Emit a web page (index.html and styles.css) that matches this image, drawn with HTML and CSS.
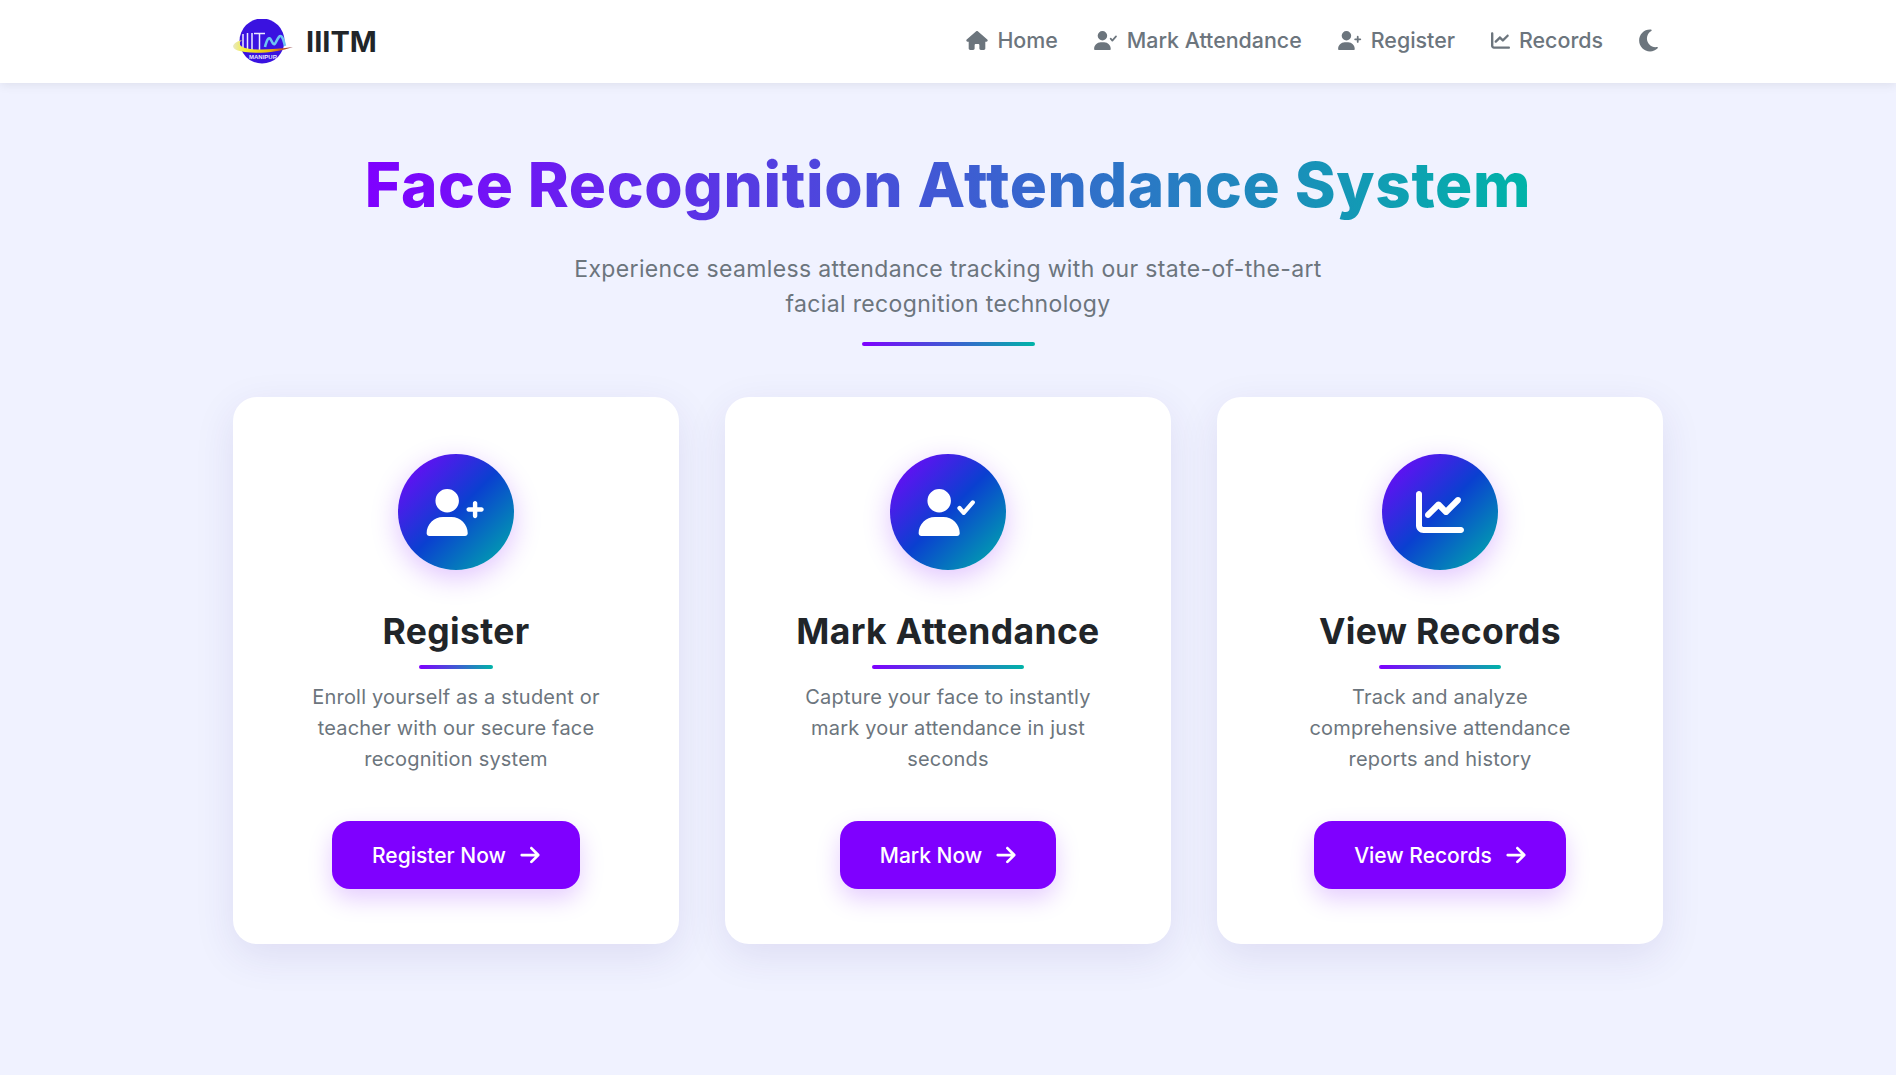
FILE: index.html
```html
<!DOCTYPE html>
<html lang="en">
<head>
<meta charset="utf-8">
<title>IIITM Face Recognition Attendance System</title>
<link rel="stylesheet" href="styles.css">
</head>
<body>
<svg class="sprite" aria-hidden="true">
  <symbol id="i-house" viewBox="0 0 576 512"><path d="M575.8 255.5c0 18-15 32.1-32 32.1h-32l.7 160.2c0 2.7-.2 5.4-.5 8.1V472c0 22.1-17.9 40-40 40H456c-1.1 0-2.2 0-3.3-.1c-1.4 .1-2.8 .1-4.2 .1H416 392c-22.1 0-40-17.9-40-40V448 384c0-17.7-14.3-32-32-32H256c-17.7 0-32 14.3-32 32v64 24c0 22.1-17.9 40-40 40H160 128.1c-1.5 0-3-.1-4.5-.2c-1.2 .1-2.4 .2-3.6 .2H104c-22.1 0-40-17.9-40-40V360c0-.9 0-1.9 .1-2.8V287.6H32c-18 0-32-14-32-32.1c0-9 3-17 10-24L266.4 8c7-7 15-8 22-8s15 2 21 7L564.8 231.5c8 7 12 15 11 24z"/></symbol>
  <symbol id="i-check" viewBox="0 0 640 512"><path d="M96 128a128 128 0 1 1 256 0A128 128 0 1 1 96 128zM0 482.3C0 383.8 79.8 304 178.3 304h91.4C368.2 304 448 383.8 448 482.3c0 16.4-13.3 29.7-29.7 29.7H29.7C13.3 512 0 498.7 0 482.3z"/><path d="M445 207l46 53 99-114" fill="none" stroke="currentColor" stroke-width="46" stroke-linecap="round" stroke-linejoin="round"/></symbol>
  <symbol id="i-plus" viewBox="0 0 640 512"><path d="M96 128a128 128 0 1 1 256 0A128 128 0 1 1 96 128zM0 482.3C0 383.8 79.8 304 178.3 304h91.4C368.2 304 448 383.8 448 482.3c0 16.4-13.3 29.7-29.7 29.7H29.7C13.3 512 0 498.7 0 482.3zM504 294V248H458c-13.3 0-24-10.7-24-24s10.7-24 24-24h46V154c0-13.3 10.7-24 24-24s24 10.7 24 24v46h46c13.3 0 24 10.7 24 24s-10.7 24-24 24H552v46c0 13.3-10.7 24-24 24s-24-10.7-24-24z"/></symbol>
  <symbol id="i-chart" viewBox="0 0 512 512"><path d="M64 64c0-17.7-14.3-32-32-32S0 46.3 0 64V400c0 44.2 35.8 80 80 80H480c17.7 0 32-14.3 32-32s-14.3-32-32-32H80c-8.8 0-16-7.2-16-16V64zm406.6 86.6c12.5-12.5 12.5-32.8 0-45.3s-32.8-12.5-45.3 0L320 210.7l-57.4-57.4c-12.5-12.5-32.8-12.5-45.3 0l-112 112c-12.5 12.5-12.5 32.8 0 45.3s32.8 12.5 45.3 0L240 221.3l57.4 57.4c12.5 12.5 32.8 12.5 45.3 0l128-128z"/></symbol>
  <symbol id="i-moon" viewBox="0 0 384 512"><path d="M223.5 32C100 32 0 132.3 0 256S100 480 223.5 480c60.6 0 115.5-24.2 155.8-63.4c5-4.9 6.3-12.5 3.1-18.7s-10.1-9.7-17-8.5c-9.8 1.7-19.8 2.6-30.1 2.6c-96.9 0-175.5-78.8-175.5-176c0-65.8 36-123.1 89.3-153.3c6.1-3.5 9.2-10.5 7.7-17.3s-7.3-11.9-14.3-12.5c-6.3-.5-12.6-.8-19-.8z"/></symbol>
  <symbol id="i-arrow" viewBox="0 0 448 512"><path d="M438.6 278.6c12.5-12.5 12.5-32.8 0-45.3l-160-160c-12.5-12.5-32.8-12.5-45.3 0s-12.5 32.8 0 45.3L338.7 224 32 224c-17.7 0-32 14.3-32 32s14.3 32 32 32l306.7 0L233.4 393.4c-12.5 12.5-12.5 32.8 0 45.3s32.8 12.5 45.3 0l160-160z"/></symbol>
</svg>

<header class="navbar">
  <div class="nav-inner">
    <a class="brand">
      <svg class="logo" viewBox="0 0 60 46">
        <defs>
          <linearGradient id="ring" x1="0" x2="1" y1="0" y2="0">
            <stop offset="0" stop-color="#e8e8c8"/>
            <stop offset=".2" stop-color="#f6f030"/>
            <stop offset=".6" stop-color="#e8c010"/>
            <stop offset=".8" stop-color="#d06020"/>
            <stop offset="1" stop-color="#803040"/>
          </linearGradient>
        </defs>
        <circle cx="29" cy="22" r="22.5" fill="#3a12e0"/>
        <path d="M10 15v15M14.500 14v16M19 14v17M21 14.500h11M26.500 14.500v17" stroke="#eceaff" stroke-width="1.500" fill="none"/>
        <path d="M32 28c2-8 4-11 6-7s3 6 5 2s4-8 6-5s2 6 3 9" stroke="#6ec4f2" stroke-width="2.600" fill="none"/>
        <path d="M0 27C1 24 5 22 9 21C5 24 6 27 12 29C24 32 44 30 60 28C46 33 26 35 12 33C4 32 0 30 0 27Z" fill="url(#ring)"/>
        <text class="logo-text" x="30" y="39.500" text-anchor="middle">MANIPUR</text>
      </svg>
      <span class="brand-name">IIITM</span>
    </a>
    <nav class="nav-links">
      <a class="nav-link"><svg class="ni ni-house"><use href="#i-house"/></svg>Home</a>
      <a class="nav-link"><svg class="ni ni-user"><use href="#i-check"/></svg>Mark Attendance</a>
      <a class="nav-link"><svg class="ni ni-user"><use href="#i-plus"/></svg>Register</a>
      <a class="nav-link"><svg class="ni ni-chart"><use href="#i-chart"/></svg>Records</a>
      <button class="theme-toggle" aria-label="Toggle theme"><svg class="ni-moon"><use href="#i-moon"/></svg></button>
    </nav>
  </div>
</header>

<main class="content">
  <section class="hero">
    <h1 class="hero-title">Face Recognition Attendance System</h1>
    <p class="hero-sub">Experience seamless attendance tracking with our state-of-the-art<br>facial recognition technology</p>
    <div class="hero-rule"></div>
  </section>

  <section class="cards">
    <article class="card">
      <div class="card-icon"><svg class="ci-user"><use href="#i-plus"/></svg></div>
      <h2 class="card-title">Register</h2>
      <p class="card-text">Enroll yourself as a student or<br>teacher with our secure face<br>recognition system</p>
      <a class="btn">Register Now<svg class="btn-arrow"><use href="#i-arrow"/></svg></a>
    </article>
    <article class="card">
      <div class="card-icon"><svg class="ci-user"><use href="#i-check"/></svg></div>
      <h2 class="card-title">Mark Attendance</h2>
      <p class="card-text">Capture your face to instantly<br>mark your attendance in just<br>seconds</p>
      <a class="btn">Mark Now<svg class="btn-arrow"><use href="#i-arrow"/></svg></a>
    </article>
    <article class="card">
      <div class="card-icon"><svg class="ci-chart"><use href="#i-chart"/></svg></div>
      <h2 class="card-title">View Records</h2>
      <p class="card-text">Track and analyze<br>comprehensive attendance<br>reports and history</p>
      <a class="btn">View Records<svg class="btn-arrow"><use href="#i-arrow"/></svg></a>
    </article>
  </section>
</main>
</body>
</html>
```

FILE: styles.css
```css
* { box-sizing: border-box; margin: 0; padding: 0; }

html, body { height: 100%; }

body {
  background: #f0f2ff;
  color: #212529;
  font-family: Inter, "Liberation Sans", sans-serif;
  overflow: hidden;
}

.sprite { display: none; }

.navbar {
  height: 83px;
  background: #fff;
  box-shadow: 0 2px 10px rgba(0, 0, 0, .08);
  position: relative;
}

.nav-inner {
  width: 1430px;
  height: 100%;
  margin: 0 auto;
  display: flex;
  align-items: center;
  justify-content: space-between;
}

.brand { display: flex; align-items: center; gap: 13px; }
.logo { width: 60px; height: 46px; }
.logo-text { font: 700 6px "Liberation Sans", sans-serif; fill: #e8e8ff; }
.brand-name { font-size: 29px; font-weight: 700; color: #212529; }

.nav-links { display: flex; align-items: center; gap: 36px; margin-right: 5px; padding-bottom: 3px; }

.nav-link {
  display: flex;
  align-items: center;
  gap: 9px;
  color: #6c757d;
  font-size: 21.4px;
  font-weight: 500;
}

.ni { fill: #6c757d; height: 19px; }
.ni-house { width: 22px; }
.ni-user { width: 24px; }
.ni-chart { width: 19px; height: 19px; }

.theme-toggle { background: none; border: 0; display: flex; }
.ni-moon { width: 19px; height: 25px; fill: #6c757d; }

.content { width: 1430px; margin: 0 auto; }

.hero { padding-top: 66px; text-align: center; }

.hero-title {
  font-size: 62px;
  line-height: 72px;
  font-weight: 800;
  letter-spacing: .65px;
  width: max-content;
  margin: 0 auto;
  background: linear-gradient(90deg, #7f00ff, #00b4a8);
  -webkit-background-clip: text;
  background-clip: text;
  color: transparent;
}

.hero-sub {
  margin-top: 31px;
  font-size: 23px;
  letter-spacing: .35px;
  line-height: 35px;
  color: #6c757d;
}

.hero-rule {
  width: 173px;
  height: 4px;
  margin: 20px auto 0;
  border-radius: 2px;
  background: linear-gradient(90deg, #7f00ff, #00b4a8);
}

.cards {
  margin-top: 51px;
  display: grid;
  grid-template-columns: repeat(3, 446px);
  gap: 46px;
}

.card {
  height: 547px;
  padding-top: 57px;
  background: #fff;
  border-radius: 24px;
  box-shadow: 0 12px 40px rgba(60, 40, 140, .1);
  display: flex;
  flex-direction: column;
  align-items: center;
  text-align: center;
}

.card-icon {
  width: 116px;
  height: 116px;
  border-radius: 50%;
  background: linear-gradient(135deg, #7f00ff, #0a40d0 50%, #00b4a8);
  box-shadow: 0 8px 28px rgba(127, 0, 255, .24);
  display: flex;
  align-items: center;
  justify-content: center;
  color: #fff;
}

.ci-user { width: 60px; height: 47px; fill: #fff; }
.ci-chart { width: 48px; height: 48px; fill: #fff; }

.card-title {
  margin-top: 41px;
  font-size: 35.5px;
  letter-spacing: .35px;
  line-height: 42px;
  font-weight: 700;
  position: relative;
  padding-bottom: 16px;
}

.card-title::after {
  content: "";
  position: absolute;
  left: 25%;
  bottom: 0;
  width: 50%;
  height: 4px;
  border-radius: 2px;
  background: linear-gradient(90deg, #7f00ff, #00b4a8);
}

.card-text {
  margin-top: 13px;
  font-size: 20px;
  letter-spacing: .2px;
  line-height: 31px;
  color: #6c757d;
}

.btn {
  margin-top: 46px;
  height: 68px;
  padding: 0 40px;
  display: flex;
  align-items: center;
  gap: 14px;
  background: #7f00ff;
  color: #fff;
  border-radius: 18px;
  font-size: 21px;
  font-weight: 500;
  box-shadow: 0 10px 24px rgba(127, 0, 255, .2);
}

.btn-arrow { width: 20px; height: 22px; fill: #fff; }
```
